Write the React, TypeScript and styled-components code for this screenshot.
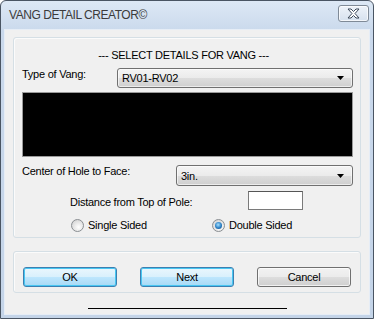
import * as React from 'react';
import styled, { createGlobalStyle } from 'styled-components';

const GlobalStyle = createGlobalStyle`
	html, body {
		margin: 0;
		padding: 0;
		background: #ffffff;
	}
	body {
		font-family: 'Liberation Sans', Arial, sans-serif;
		font-size: 11px;
		letter-spacing: -0.25px;
		color: #000;
	}
`;

const Window = styled.div`
	box-sizing: border-box;
	width: 374px;
	height: 319px;
	display: flex;
	flex-direction: column;
	padding: 0 3px 3px 3px;
	border: 1px solid #4a5563;
	border-radius: 6px 6px 0 0;
	background: linear-gradient(#dde8f5, #cad9ec 30px, #c4d4e8);
`;

const TitleBar = styled.div`
	height: 28px;
	flex: none;
	display: flex;
	align-items: center;
	justify-content: space-between;
	padding-left: 5px;
`;

const Title = styled.div`
	font-size: 12px;
	letter-spacing: -0.45px;
	color: #3b3b3b;
	margin-top: -1px;
`;

const CloseButton = styled.div`
	box-sizing: border-box;
	width: 31px;
	height: 17px;
	margin: -4px 1px 0 0;
	border: 1px solid #7f8a97;
	border-radius: 3px;
	background: linear-gradient(#eef3f9, #d6e1ee);
	box-shadow: inset 0 0 0 1px rgba(255, 255, 255, 0.7);
	display: flex;
	align-items: center;
	justify-content: center;
`;

const Client = styled.div`
	flex: 1;
	display: flex;
	flex-direction: column;
	background: #f0f0f0;
	border: 1px solid #e6edf6;
	padding: 7px 8px 0 8px;
`;

const GroupBox = styled.div<{ $height: number }>`
	box-sizing: border-box;
	height: ${(p) => p.$height}px;
	border: 1px solid #d5dfe5;
	border-radius: 3px;
	box-shadow: inset 1px 1px 0 #fbfbfb;
`;

const DetailsGroup = styled(GroupBox)`
	display: flex;
	flex-direction: column;
	padding: 10px 7px 0 8px;
`;

const Heading = styled.div`
	text-align: center;
	line-height: 14px;
	height: 14px;
	margin-left: -8px;
`;

const FieldRow = styled.div<{ $top: number }>`
	display: flex;
	align-items: flex-start;
	margin-top: ${(p) => p.$top}px;
`;

const Label = styled.div<{ $width: number }>`
	width: ${(p) => p.$width}px;
	flex: none;
	line-height: 14px;
`;

const Select = styled.div<{ $height: number }>`
	box-sizing: border-box;
	flex: 1;
	height: ${(p) => p.$height}px;
	margin-top: 1px;
	border: 1px solid #707070;
	border-radius: 3px;
	background: linear-gradient(#f4f4f4, #ebebeb 50%, #dddddd 51%, #cfcfcf);
	box-shadow: inset 0 0 0 1px rgba(255, 255, 255, 0.6);
	display: flex;
	align-items: center;
	justify-content: space-between;
	padding: 0 8px 0 4px;
`;

const Preview = styled.div`
	box-sizing: border-box;
	height: 65px;
	margin-top: 4px;
	background: #000;
	border: 1px solid #9a9a9a;
`;

const DistanceRow = styled.div`
	display: flex;
	align-items: flex-start;
	margin-top: 5px;
	padding-left: 48px;
`;

const DistanceLabel = styled(Label)`
	margin-top: 4px;
`;

const TextInput = styled.div`
	box-sizing: border-box;
	width: 55px;
	height: 19px;
	background: #fff;
	border: 1px solid #7a7a7a;
	border-top-color: #555;
`;

const RadioRow = styled.div`
	display: flex;
	align-items: center;
	margin-top: 8px;
	padding-left: 49px;
`;

const RadioOption = styled.div<{ $width?: number }>`
	display: flex;
	align-items: center;
	gap: 4px;
	width: ${(p) => (p.$width ? `${p.$width}px` : 'auto')};
	line-height: 14px;
`;

const RadioCircle = styled.span<{ $checked?: boolean }>`
	box-sizing: border-box;
	width: 13px;
	height: 13px;
	border-radius: 50%;
	border: 1px solid #8a8e92;
	background: radial-gradient(circle at 60% 65%, #ffffff, #e3e3e3 55%, #c9c9c9);
	display: flex;
	align-items: center;
	justify-content: center;

	&::after {
		content: '';
		display: ${(p) => (p.$checked ? 'block' : 'none')};
		width: 7px;
		height: 7px;
		border-radius: 50%;
		background: radial-gradient(circle at 45% 40%, #a6e1ff, #2b7fc4 55%, #0d3f73);
	}
`;

const ButtonGroup = styled(GroupBox)`
	margin-top: 13px;
	display: flex;
	align-items: flex-start;
	gap: 23px;
	padding: 15px 9px 0 9px;
`;

const Button = styled.div<{ $primary?: boolean }>`
	box-sizing: border-box;
	width: 94px;
	height: 20px;
	border: 1px solid ${(p) => (p.$primary ? '#3c7fb1' : '#707070')};
	border-radius: 3px;
	background: ${(p) =>
		p.$primary
			? 'linear-gradient(#eaf6fd, #d9f0fc 50%, #bee6fd 51%, #a7d9f5)'
			: 'linear-gradient(#f2f2f2, #ebebeb 50%, #dddddd 51%, #cfcfcf)'};
	box-shadow: inset 0 0 0 1px ${(p) => (p.$primary ? '#48c7f2' : 'rgba(255,255,255,0.7)')};
	display: flex;
	align-items: center;
	justify-content: center;
	line-height: 14px;
`;

const Rule = styled.div`
	width: 199px;
	height: 1px;
	margin-top: 15px;
	align-self: center;
	background: #000;
`;

function DropArrow() {
	return (
		<svg width="7" height="4" viewBox="0 0 7 4">
			<path d="M0 0 H7 L3.5 4 Z" fill="#000" />
		</svg>
	);
}

function CloseGlyph() {
	return (
		<svg width="13" height="11" viewBox="0 0 13 11">
			<path
				d="M1 1 H4 L6.5 3.5 L9 1 H12 L8 5.5 L12 10 H9 L6.5 7.5 L4 10 H1 L5 5.5 Z"
				fill="#ffffff"
				stroke="#3d4a5a"
				strokeWidth="1"
				strokeLinejoin="round"
			/>
		</svg>
	);
}

export default function App() {
	return (
		<>
			<GlobalStyle />
			<Window>
				<TitleBar>
					<Title>VANG DETAIL CREATOR©</Title>
					<CloseButton>
						<CloseGlyph />
					</CloseButton>
				</TitleBar>
				<Client>
					<DetailsGroup $height={201}>
						<Heading>--- SELECT DETAILS FOR VANG ---</Heading>
						<FieldRow $top={5}>
							<Label $width={95}>Type of Vang:</Label>
							<Select $height={20}>
								<span>RV01-RV02</span>
								<DropArrow />
							</Select>
						</FieldRow>
						<Preview />
						<FieldRow $top={7}>
							<Label $width={154}>Center of Hole to Face:</Label>
							<Select $height={21}>
								<span>3in.</span>
								<DropArrow />
							</Select>
						</FieldRow>
						<DistanceRow>
							<DistanceLabel $width={178}>Distance from Top of Pole:</DistanceLabel>
							<TextInput />
						</DistanceRow>
						<RadioRow>
							<RadioOption $width={141}>
								<RadioCircle />
								Single Sided
							</RadioOption>
							<RadioOption>
								<RadioCircle $checked />
								Double Sided
							</RadioOption>
						</RadioRow>
					</DetailsGroup>
					<ButtonGroup $height={42}>
						<Button $primary>OK</Button>
						<Button $primary>Next</Button>
						<Button>Cancel</Button>
					</ButtonGroup>
					<Rule />
				</Client>
			</Window>
		</>
	);
}
